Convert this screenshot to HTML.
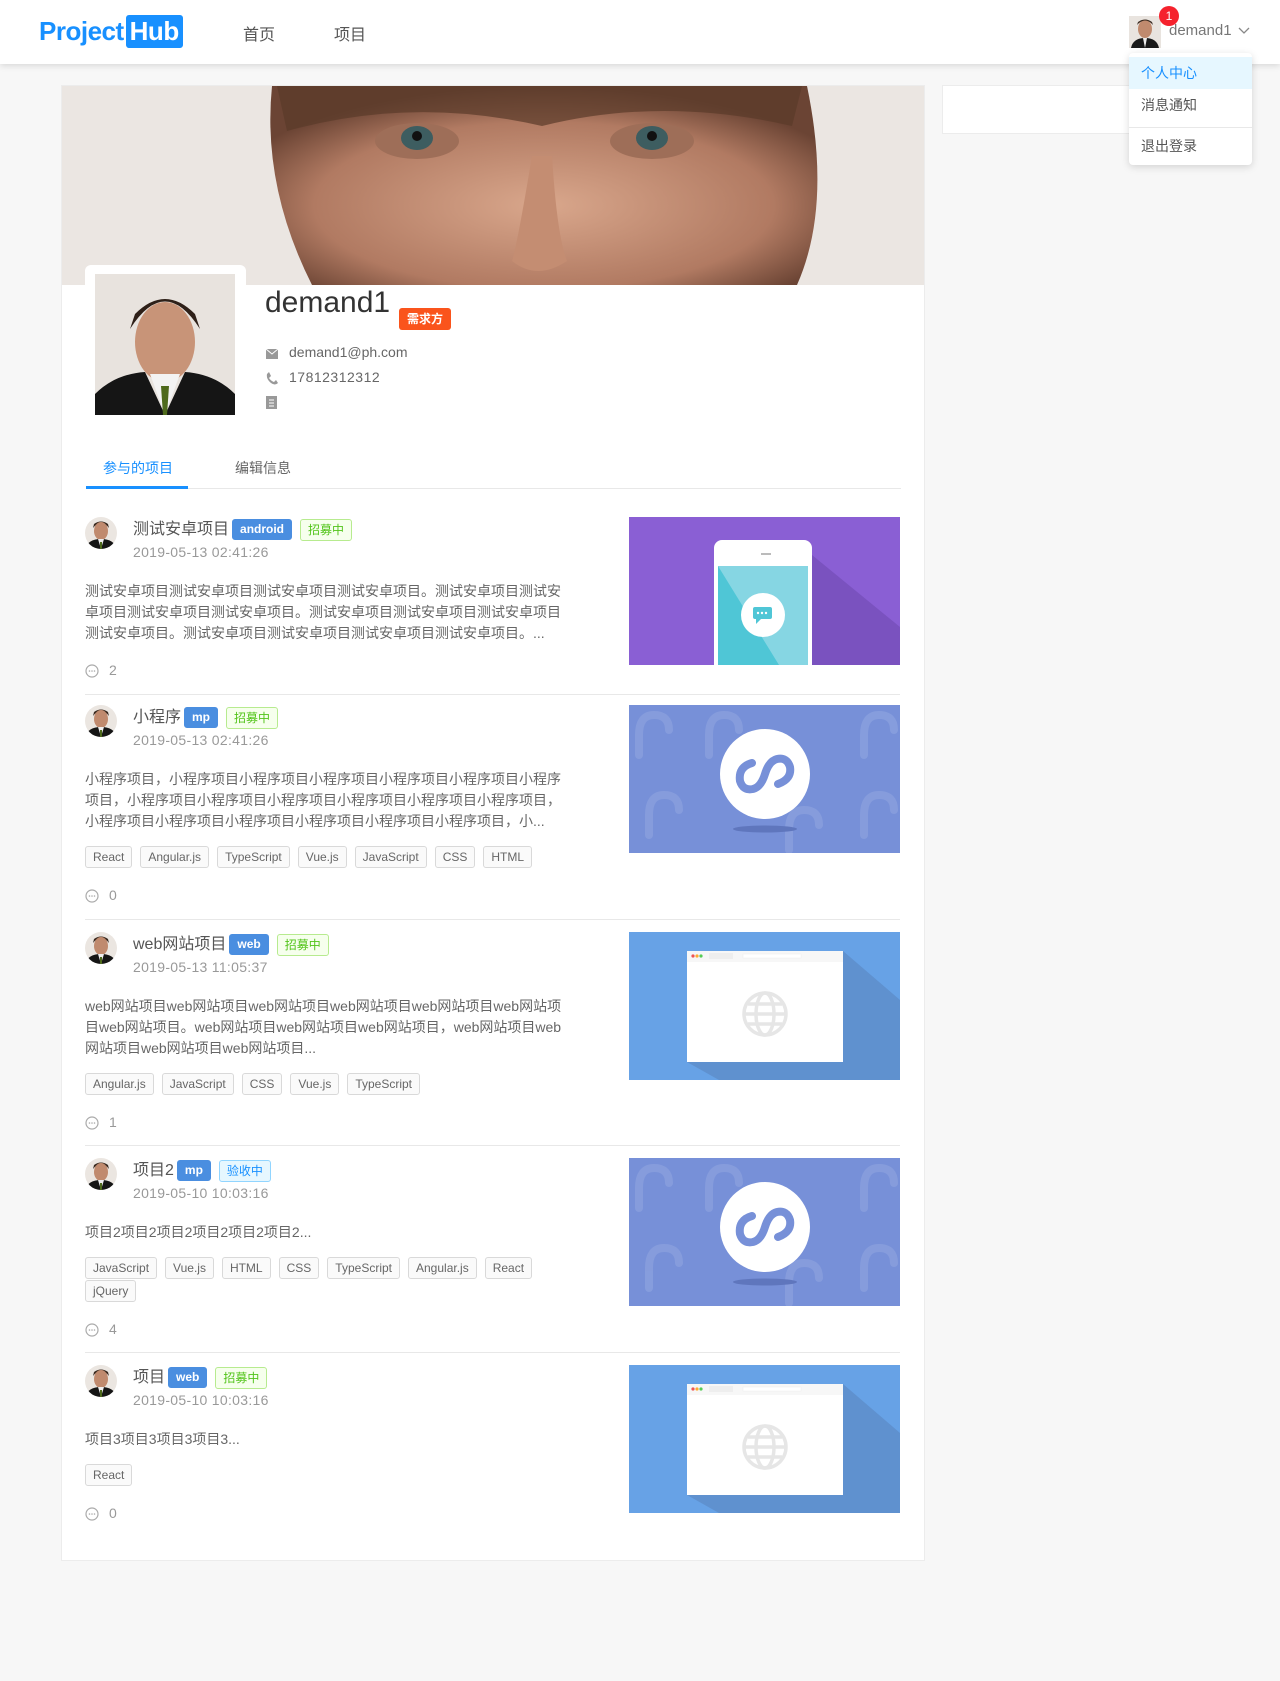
<!DOCTYPE html>
<html><head><meta charset="utf-8">
<style>
*{box-sizing:border-box;margin:0;padding:0}
body{width:1280px;height:1681px;background:#f7f7f7;font-family:"Liberation Sans","Noto Sans CJK SC",sans-serif;color:#666;position:relative;overflow:hidden}
.hdr{position:absolute;left:0;top:0;width:1280px;height:64px;background:#fff;box-shadow:0 2px 6px rgba(0,0,0,.12);z-index:2}
.logo{position:absolute;left:39px;top:15px;font-weight:bold;font-size:26px;color:#1890ff;letter-spacing:-.5px;line-height:32px}
.logo span{background:#1890ff;color:#fff;padding:0 4px;border-radius:3px;margin-left:2px;display:inline-block;height:33px}
.nav{position:absolute;top:21px;font-size:16px;color:#555}
.card{position:absolute;left:61px;top:85px;width:864px;height:1476px;background:#fff;border:1px solid #ececec}
.rcard{position:absolute;left:942px;top:85px;width:300px;height:49px;background:#fff;border:1px solid #ececec}
.dd{position:absolute;left:1129px;top:53px;width:123px;height:112px;background:#fff;border-radius:4px;box-shadow:0 2px 8px rgba(0,0,0,.15);z-index:3;font-size:14px}
.dd div{height:32px;line-height:32px;padding-left:12px;color:#555}
.tag{display:inline-block;height:22px;line-height:20px;font-size:12px;padding:0 7px;border-radius:3px;border:1px solid #d9d9d9;background:#fafafa;color:#666;margin-right:6px;vertical-align:middle}
.tb{background:#4a8ee0;border-color:#4a8ee0;color:#fff;font-weight:bold;height:21px;line-height:19px;margin-left:3px;margin-right:8px}
.tg{background:#f6ffed;border-color:#b7eb8f;color:#52c41a}
.tbl{background:#e6f7ff;border-color:#91d5ff;color:#1890ff}
.item{position:absolute;left:85px;width:815px}
.ava{position:absolute;left:0;top:0;width:32px;height:32px;border-radius:50%;overflow:hidden}
.ttl{position:absolute;left:48px;top:1px;font-size:16px;color:#555;height:24px;line-height:24px;white-space:nowrap}
.date{position:absolute;left:48px;top:27px;font-size:14px;color:#999;letter-spacing:.3px}
.body{padding-top:64px;width:480px}
.desc{font-size:14px;line-height:21px;color:#666}
.tags{margin-top:14px;font-size:0;line-height:23px}
.tags .tag{margin-right:8px}
.cm{margin-top:16px;height:20px;line-height:20px;font-size:14px;color:#999}
.cm svg{vertical-align:-3px;margin-right:10px}
.pic{position:absolute;left:544px;top:0;width:271px;height:148px}
.sep{position:absolute;left:85px;width:815px;height:1px;background:#e8e8e8}
</style></head><body>
<div class="hdr">
 <div class="logo">Project<span>Hub</span></div>
 <div class="nav" style="left:243px">首页</div>
 <div class="nav" style="left:334px">项目</div>
 <svg style="position:absolute;left:1129px;top:16px" width="32" height="32"><rect width="32" height="32" fill="#e9e4df"/><ellipse cx="16" cy="13" rx="7" ry="9" fill="#c08a6e"/><path d="M8 9 Q16 0 24 9 L23 6 Q16 1 9 6Z" fill="#3a2a20"/><path d="M2 32 Q4 22 16 22 Q28 22 30 32Z" fill="#1a1a1a"/><path d="M14 22 L16 32 L18 22Z" fill="#eee"/></svg>
 <div style="position:absolute;left:1159px;top:6px;width:20px;height:20px;border-radius:50%;background:#f5222d;color:#fff;font-size:12px;text-align:center;line-height:20px">1</div>
 <div style="position:absolute;left:1169px;top:22px;font-size:15px;color:#777">demand1</div>
 <svg style="position:absolute;left:1238px;top:27px" width="12" height="8"><path d="M1 1 L6 6 L11 1" stroke="#888" fill="none" stroke-width="1.3"/></svg>
</div>
<div class="dd" style="padding-top:4px">
 <div style="background:#e6f7ff;color:#1890ff">个人中心</div>
 <div>消息通知</div>
 <div style="border-top:1px solid #e8e8e8;margin-top:6px;height:36px;line-height:36px">退出登录</div>
</div>
<div class="rcard"></div>
<div class="card">
 <svg style="position:absolute;left:0;top:0" width="862" height="199">
  <defs><radialGradient id="f" cx="50%" cy="60%" r="60%"><stop offset="0" stop-color="#d9a78c"/><stop offset=".7" stop-color="#b17a62"/><stop offset="1" stop-color="#6b4434"/></radialGradient></defs>
  <rect width="862" height="199" fill="#ebe6e2"/>
  <path d="M210 0 L745 0 Q770 120 735 199 L250 199 Q200 100 210 0Z" fill="url(#f)"/>
  <path d="M215 0 L740 0 L730 40 Q600 10 480 40 Q350 10 225 45Z" fill="#5a3a2a" opacity=".7"/>
  <ellipse cx="355" cy="55" rx="42" ry="18" fill="#9e6e58"/><ellipse cx="355" cy="52" rx="16" ry="12" fill="#3d5d60"/><circle cx="355" cy="50" r="5" fill="#111"/>
  <ellipse cx="590" cy="55" rx="42" ry="18" fill="#9e6e58"/><ellipse cx="590" cy="52" rx="16" ry="12" fill="#3d5d60"/><circle cx="590" cy="50" r="5" fill="#111"/>
  <path d="M470 70 Q455 160 450 175 Q475 195 505 175 Q495 150 490 70Z" fill="#c48d72"/>
 </svg>
 <div style="position:absolute;left:23px;top:179px;width:161px;height:160px;background:#fff;border-radius:6px 6px 0 0"></div>
 <svg style="position:absolute;left:33px;top:188px" width="140" height="141"><rect width="140" height="141" fill="#e8e3de"/><path d="M35 55 Q70 0 105 55 L100 40 Q70 10 40 40Z" fill="#2e2018"/><ellipse cx="70" cy="68" rx="30" ry="40" fill="#c89478"/><path d="M0 141 L0 120 Q20 100 50 98 L70 141 L90 98 Q120 100 140 120 L140 141Z" fill="#151515"/><path d="M55 100 L70 141 L85 100Z" fill="#f3f3f3"/><path d="M66 112 L74 112 L72 141 L68 141Z" fill="#4e6a1c"/></svg>
 <div style="position:absolute;left:203px;top:200px;font-size:30px;color:#333">demand1</div>
 <div style="position:absolute;left:337px;top:222px;background:#fa541c;color:#fff;font-size:12px;font-weight:bold;padding:0 8px;height:22px;line-height:22px;border-radius:3px">需求方</div>
 <svg style="position:absolute;left:204px;top:263px" width="12" height="10"><rect width="12" height="10" fill="#999"/><path d="M0 0 L6 5 L12 0" stroke="#fff" fill="none"/></svg>
 <div style="position:absolute;left:227px;top:258px;font-size:14px;color:#666">demand1@ph.com</div>
 <svg style="position:absolute;left:204px;top:286px" width="12" height="13"><path d="M3 0 L5 4 L3 6 Q5 9 8 10 L10 8 L12 11 Q9 14 5 11 Q0 7 1 2Z" fill="#999"/></svg>
 <div style="position:absolute;left:227px;top:283px;font-size:14px;color:#666;letter-spacing:.5px">17812312312</div>
 <svg style="position:absolute;left:204px;top:310px" width="12" height="13"><rect width="11" height="13" fill="#999"/><path d="M3 4H8M3 7H8M3 10H8" stroke="#fff"/></svg>
 <div style="position:absolute;left:41px;top:372px;font-size:14px;color:#1890ff">参与的项目</div>
 <div style="position:absolute;left:173px;top:372px;font-size:14px;color:#666">编辑信息</div>
 <div style="position:absolute;left:24px;top:402px;width:815px;height:1px;background:#e8e8e8"></div>
 <div style="position:absolute;left:24px;top:400px;width:102px;height:3px;background:#1890ff"></div>
</div>

<svg width="0" height="0" style="position:absolute"><defs>
<symbol id="av" viewBox="0 0 32 32"><rect width="32" height="32" fill="#ebe6e1"/><path d="M8 11 Q16 1 24 11 L23 7 Q16 2 9 7Z" fill="#3a2a20"/><ellipse cx="16" cy="14" rx="7" ry="9" fill="#c08a6e"/><path d="M0 32 Q3 22 16 22 Q29 22 32 32Z" fill="#151515"/><path d="M13 22 L16 32 L19 22Z" fill="#eee"/><path d="M15 25 L17 25 L17 32 L15 32Z" fill="#4e6a1c"/></symbol>
<symbol id="cm" viewBox="0 0 14 14"><circle cx="7" cy="7" r="6" fill="none" stroke="#aaa" stroke-width="1.2"/><circle cx="4.5" cy="7" r=".8" fill="#aaa"/><circle cx="7" cy="7" r=".8" fill="#aaa"/><circle cx="9.5" cy="7" r=".8" fill="#aaa"/></symbol>
<symbol id="mp" viewBox="0 0 271 148"><rect width="271" height="148" fill="#7790d8"/>
<g fill="none" stroke="#8aa0de" stroke-width="8" stroke-linecap="round" opacity=".8"><path d="M10 30 q0 -20 15 -20 q15 0 15 15 M10 30 v20"/><path d="M80 30 q0 -20 15 -20 q15 0 15 15 M80 30 v20"/><path d="M160 125 q0 -20 15 -20 q15 0 15 15 M160 125 v20"/><path d="M235 30 q0 -20 15 -20 q15 0 15 15 M235 30 v20"/><path d="M20 110 q0 -20 15 -20 q15 0 15 15 M20 110 v20"/><path d="M235 110 q0 -20 15 -20 q15 0 15 15 M235 110 v20"/></g>
<ellipse cx="136" cy="124" rx="32" ry="3.5" fill="#5f76bd"/><circle cx="136" cy="69" r="45" fill="#fff"/>
<path d="M123 58 q-14 4 -12 18 q3 10 13 8 q8 -2 12 -15 q4 -13 12 -15 q10 -2 13 8 q2 12 -12 17" fill="none" stroke="#7790d8" stroke-width="8" stroke-linecap="round"/></symbol>
<symbol id="web" viewBox="0 0 271 148"><rect width="271" height="148" fill="#67a2e6"/><path d="M214 19 L271 68 L271 148 L90 148 L58 130 Z" fill="#5f91cf"/><rect x="58" y="19" width="156" height="111" fill="#fff"/><rect x="58" y="19" width="156" height="11" fill="#f7f7f7"/><circle cx="64" cy="24" r="1.6" fill="#e55"/><circle cx="68" cy="24" r="1.6" fill="#fa3"/><circle cx="72" cy="24" r="1.6" fill="#5c5"/><rect x="80" y="21" width="24" height="6" fill="#eee"/><rect x="114" y="22" width="58" height="4" fill="#fff" stroke="#eee" stroke-width=".5"/><circle cx="136" cy="82" r="21" fill="none" stroke="#e6e6e6" stroke-width="3.5"/><ellipse cx="136" cy="82" rx="9" ry="21" fill="none" stroke="#e6e6e6" stroke-width="3.5"/><path d="M115 82 H157 M119 72 H153 M119 92 H153" stroke="#e6e6e6" stroke-width="3.5"/></symbol>
<symbol id="and" viewBox="0 0 271 148"><rect width="271" height="148" fill="#8a5fd4"/><path d="M183 38 L271 110 L271 148 L183 148Z" fill="#7a52bf"/><rect x="85" y="23" width="98" height="140" rx="8" fill="#fff"/><rect x="89" y="49" width="90" height="110" fill="#86d6e3"/><path d="M89 49 L89 148 L150 148Z" fill="#4fc6d6"/><rect x="132" y="36" width="10" height="2" fill="#bbb"/><circle cx="134" cy="98" r="22" fill="#fff"/><rect x="124" y="90" width="19" height="12" rx="2" fill="#4fc6d6"/><path d="M127 102 L127 107 L132 102Z" fill="#4fc6d6"/><circle cx="129" cy="96" r="1.2" fill="#fff"/><circle cx="133" cy="96" r="1.2" fill="#fff"/><circle cx="137" cy="96" r="1.2" fill="#fff"/></symbol>
</defs></svg>

<div class="item" style="top:517px">
 <svg class="ava" viewBox="0 0 32 32"><use href="#av"/></svg>
 <div class="ttl">测试安卓项目<span class="tag tb">android</span><span class="tag tg">招募中</span></div>
 <div class="date">2019-05-13 02:41:26</div>
 <svg class="pic"><use href="#and"/></svg>
 <div class="body"><div class="desc">测试安卓项目测试安卓项目测试安卓项目测试安卓项目。测试安卓项目测试安卓项目测试安卓项目测试安卓项目。测试安卓项目测试安卓项目测试安卓项目测试安卓项目。测试安卓项目测试安卓项目测试安卓项目测试安卓项目。...</div>
 <div class="cm"><svg width="14" height="14"><use href="#cm"/></svg>2</div></div>
</div>
<div class="sep" style="top:694px"></div>

<div class="item" style="top:705px">
 <svg class="ava" viewBox="0 0 32 32"><use href="#av"/></svg>
 <div class="ttl">小程序<span class="tag tb">mp</span><span class="tag tg">招募中</span></div>
 <div class="date">2019-05-13 02:41:26</div>
 <svg class="pic"><use href="#mp"/></svg>
 <div class="body"><div class="desc">小程序项目，小程序项目小程序项目小程序项目小程序项目小程序项目小程序项目，小程序项目小程序项目小程序项目小程序项目小程序项目小程序项目，小程序项目小程序项目小程序项目小程序项目小程序项目小程序项目，小...</div>
 <div class="tags"><span class="tag">React</span><span class="tag">Angular.js</span><span class="tag">TypeScript</span><span class="tag">Vue.js</span><span class="tag">JavaScript</span><span class="tag">CSS</span><span class="tag">HTML</span></div>
 <div class="cm"><svg width="14" height="14"><use href="#cm"/></svg>0</div></div>
</div>
<div class="sep" style="top:919px"></div>

<div class="item" style="top:932px">
 <svg class="ava" viewBox="0 0 32 32"><use href="#av"/></svg>
 <div class="ttl">web网站项目<span class="tag tb">web</span><span class="tag tg">招募中</span></div>
 <div class="date">2019-05-13 11:05:37</div>
 <svg class="pic"><use href="#web"/></svg>
 <div class="body"><div class="desc">web网站项目web网站项目web网站项目web网站项目web网站项目web网站项目web网站项目。web网站项目web网站项目web网站项目，web网站项目web网站项目web网站项目web网站项目...</div>
 <div class="tags"><span class="tag">Angular.js</span><span class="tag">JavaScript</span><span class="tag">CSS</span><span class="tag">Vue.js</span><span class="tag">TypeScript</span></div>
 <div class="cm"><svg width="14" height="14"><use href="#cm"/></svg>1</div></div>
</div>
<div class="sep" style="top:1145px"></div>

<div class="item" style="top:1158px">
 <svg class="ava" viewBox="0 0 32 32"><use href="#av"/></svg>
 <div class="ttl">项目2<span class="tag tb">mp</span><span class="tag tbl">验收中</span></div>
 <div class="date">2019-05-10 10:03:16</div>
 <svg class="pic"><use href="#mp"/></svg>
 <div class="body"><div class="desc">项目2项目2项目2项目2项目2项目2...</div>
 <div class="tags"><span class="tag">JavaScript</span><span class="tag">Vue.js</span><span class="tag">HTML</span><span class="tag">CSS</span><span class="tag">TypeScript</span><span class="tag">Angular.js</span><span class="tag">React</span><span class="tag">jQuery</span></div>
 <div class="cm"><svg width="14" height="14"><use href="#cm"/></svg>4</div></div>
</div>
<div class="sep" style="top:1352px"></div>

<div class="item" style="top:1365px">
 <svg class="ava" viewBox="0 0 32 32"><use href="#av"/></svg>
 <div class="ttl">项目<span class="tag tb">web</span><span class="tag tg">招募中</span></div>
 <div class="date">2019-05-10 10:03:16</div>
 <svg class="pic"><use href="#web"/></svg>
 <div class="body"><div class="desc">项目3项目3项目3项目3...</div>
 <div class="tags"><span class="tag">React</span></div>
 <div class="cm"><svg width="14" height="14"><use href="#cm"/></svg>0</div></div>
</div>
</body></html>
